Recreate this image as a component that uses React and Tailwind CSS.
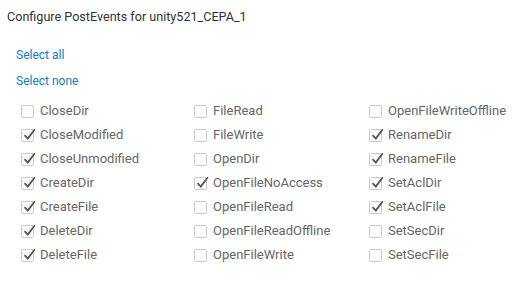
const events = [
  ["CloseDir", false], ["FileRead", false], ["OpenFileWriteOffline", false],
  ["CloseModified", true], ["FileWrite", false], ["RenameDir", true],
  ["CloseUnmodified", true], ["OpenDir", false], ["RenameFile", true],
  ["CreateDir", true], ["OpenFileNoAccess", true], ["SetAclDir", true],
  ["CreateFile", true], ["OpenFileRead", false], ["SetAclFile", true],
  ["DeleteDir", true], ["OpenFileReadOffline", false], ["SetSecDir", false],
  ["DeleteFile", true], ["OpenFileWrite", false], ["SetSecFile", false],
];

function Check({ checked }) {
  return (
    <span className="relative w-[13px] h-[13px] shrink-0 rounded-[2px] border border-[#cccccc] bg-[#fcfcfc]">
      {checked && (
        <svg
          className="absolute left-[1px] -top-[2px]"
          width="13"
          height="13"
          viewBox="0 0 13 13"
          fill="none"
        >
          <path d="M1.5 7.2 L4.8 10.6 L11.8 1.2" stroke="#555" strokeWidth="1.8" />
        </svg>
      )}
    </span>
  );
}

export default function App() {
  return (
    <div className="w-[528px] h-[282px] bg-white font-['Roboto',sans-serif]">
      <div className="pl-[7px] pt-[7px] text-[12.6px] leading-[20px] text-[#333]">
        Configure PostEvents for unity521_CEPA_1
      </div>
      <div className="pl-[16px] pt-[20px] flex flex-col gap-[10px] text-[12px] leading-[16px] text-[#0e7dc2]">
        <span>Select all</span>
        <span>Select none</span>
      </div>
      <div className="pl-[21px] pt-[10px] grid grid-cols-[173px_175px_1fr]">
        {events.map(([name, checked]) => (
          <label key={name} className="flex items-center gap-[6px] h-[24px] text-[13px] text-[#666]">
            <Check checked={checked} />
            <span>{name}</span>
          </label>
        ))}
      </div>
    </div>
  );
}
